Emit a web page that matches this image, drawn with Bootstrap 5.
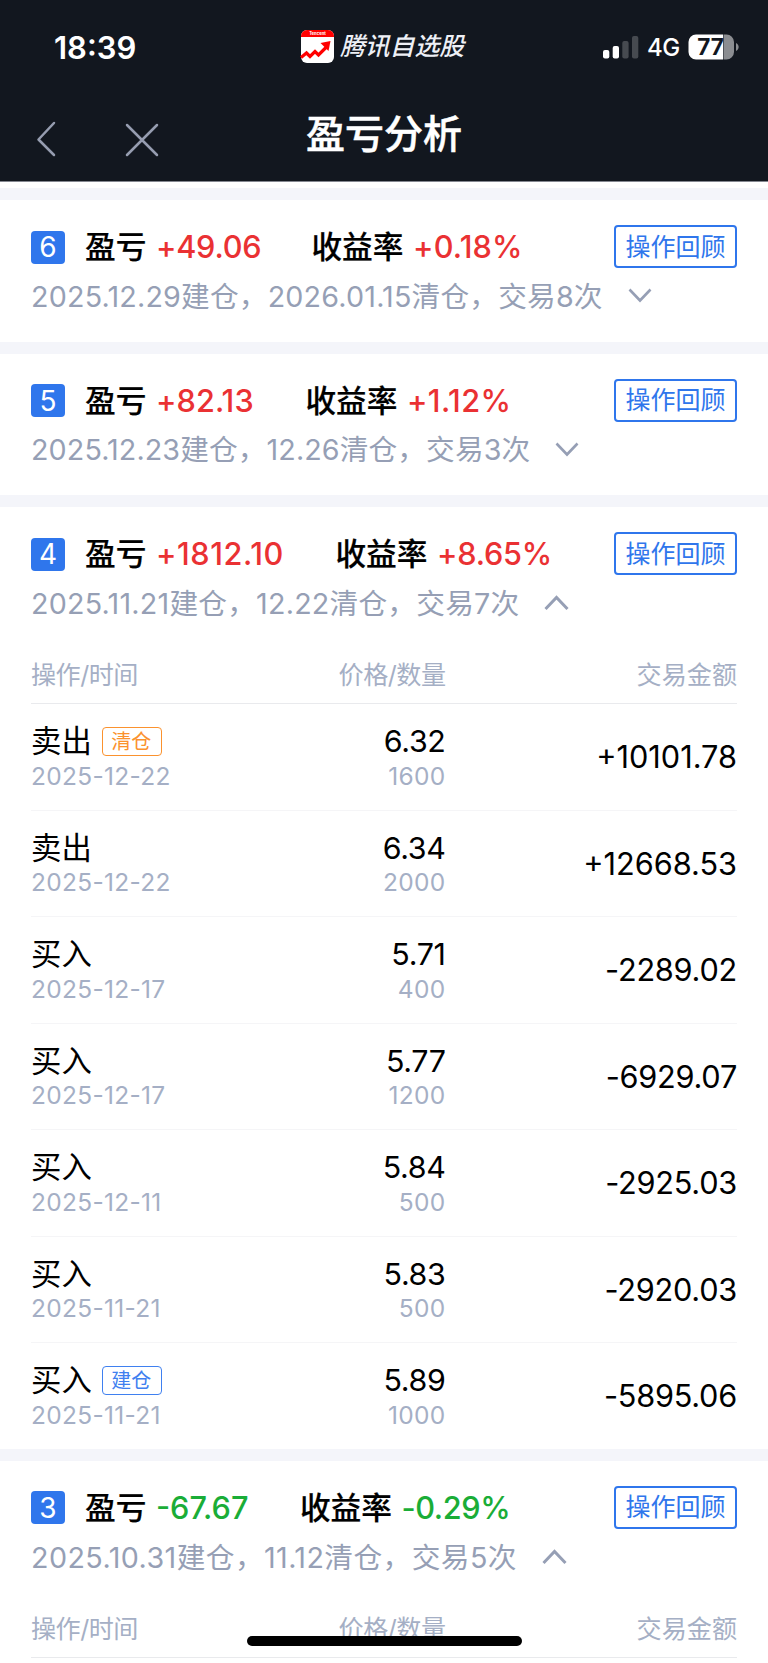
<!DOCTYPE html>
<html lang="zh-CN">
<head>
<meta charset="utf-8">
<meta name="viewport" content="width=device-width, initial-scale=1">
<title>盈亏分析</title>
<link rel="stylesheet" href="https://cdn.jsdelivr.net/npm/bootstrap@5.3.0/dist/css/bootstrap.min.css">
<style>
  body { font-family: Inter, "Noto Sans CJK SC", sans-serif; font-size: 30.7px; line-height: 1; color: #000; background: #fff; height: 1663px; overflow: hidden; position: relative; }
  .top-area { background: #12171f; height: 182px; border-bottom: 1px solid #848790; color: #fff; }
  .status-row { height: 94px; padding: 0 29px 0 54px; }
  .clock { font-size: 31px; font-weight: 600; width: 246px; padding-top: 1px; }
  .app-name { font-size: 24.8px; font-style: italic; font-weight: 500; margin-left: 6px; color: #eef0f6; padding-bottom: 2px; }
  .net { font-size: 24px; font-weight: 500; line-height: 1.4; padding: 1px 1px 0 0; letter-spacing: -.3px; margin-right: 7px; }
  .title-row { height: 87px; padding: 0 34px; }
  .page-title { font-size: 39px; font-weight: 500; -webkit-text-stroke: .5px #fff; padding-bottom: 6px; }
  .trade-card { border-top: 12px solid #f4f5fa; height: 153.6px; padding: 25px 31px 0 31px; }
  .trade-card.opened { height: auto; }
  .num-box { background: #2f76ec; color: #fff; width: 34px; height: 33px; border-radius: 4px; font-size: 28px; margin-top: 1px; }
  .head-row { height: 43px; font-weight: 500; }
  .label-text { padding-top: 2px; -webkit-text-stroke: .2px #000; }
  .value-text { padding-top: 2px; margin-left: 9.500px; letter-spacing: -.2px; }
  .rate-text { letter-spacing: .2px; }
  .gain { color: #ea3133; } .loss { color: #1aad37; }
  .review-btn { font-size: 25px; line-height: 1; color: #2f76ec; border: 2px solid #2f76ec; border-radius: 4px; width: 123px; height: 43px; padding: 1px 0 0; --bs-btn-hover-color: #2f76ec; }
  .date-row { height: 36px; margin-top: 11px; font-size: 28.7px; color: #969fb5; }
  .sp-a { letter-spacing: .18px; } .sp-b { letter-spacing: .1px; } .sp-c { letter-spacing: .21px; } .sp-d { letter-spacing: .42px; }
  .chev { margin-left: 25px; margin-top: -2px; }
  .grid-row { display: grid; grid-template-columns: 207px 207.500px 1fr; align-items: center; }
  .grid-head { height: 57px; margin-top: 25px; font-size: 25.100px; color: #a5afc5; border-bottom: 1px solid #e9eaed; padding-top: 1px; }
  .with-slash { letter-spacing: -.5px; }
  .op-row { height: 106.5px; border-bottom: 1px solid #f5f5f7; }
  .op-row:last-child { border-bottom: 0; height: 105.500px; }
  .sub-text { font-size: 24.5px; color: #a5afc5; letter-spacing: .3px; height: 29px; line-height: 29px; margin-top: -.5px; }
  .main-text { height: 41px; display: flex; align-items: center; font-size: 30.400px; margin-top: -2.200px; }
  .price-text { letter-spacing: -.35px; }
  .amount-text { padding-top: 1px; }
  .amount-out { letter-spacing: -.25px; }
  .tag-box { border: 1px solid; border-radius: 4px; font-size: 20px; width: 60px; height: 29px; margin-left: 10px; padding-right: 1px; display: flex; align-items: center; justify-content: center; letter-spacing: 0; }
  .tag-close { color: #fb922e; } .tag-open { color: #3f80f0; }
  .home-bar { position: absolute; left: 247px; top: 1636px; width: 275px; height: 10px; border-radius: 5px; background: #000; }
</style>
</head>
<body>
<header class="top-area">
  <div class="status-row d-flex align-items-center">
    <span class="clock">18:39</span>
    <svg width="34" height="34" viewBox="0 0 34 34">
      <rect x="1" y="0" width="33" height="33" rx="6" fill="#fff"/>
      <path d="M1 7V6a6 6 0 0 1 6-6h21a6 6 0 0 1 6 6v1z" fill="#f00"/>
      <text x="17.5" y="5" font-size="4.2" font-weight="700" fill="#fff" text-anchor="middle">Tencent</text>
      <path d="M1 27.5 6.5 23l3.5 3.5 5-5 3.5 3.5 8-8" fill="none" stroke="#f00" stroke-width="3.2"/>
      <path d="M20.500 13 30.500 11 28.500 21z" fill="#f00"/>
    </svg>
    <span class="app-name">腾讯自选股</span>
    <svg class="ms-auto" width="36" height="23" viewBox="0 0 36 23"><g fill="#fff"><rect x="0" y="14" width="6.300" height="8.500" rx="2"/><rect x="9.700" y="10" width="6.300" height="12.500" rx="2"/><g opacity=".22"><rect x="19.300" y="5" width="6.300" height="17.500" rx="2"/><rect x="29" y="0" width="6.300" height="22.500" rx="2"/></g></g></svg>
    <span class="net ms-2 flex-shrink-0 text-nowrap">4G</span>
    <svg width="51" height="26" viewBox="0 0 51 26">
      <path d="M8 .5h27v25H8a7.500 7.500 0 0 1-7.500-7.500V8A7.500 7.500 0 0 1 8 .5z" fill="#fff"/>
      <path d="M35.500 .5h3A7.500 7.500 0 0 1 46 8v10a7.500 7.500 0 0 1-7.500 7.500h-3z" fill="#8b8d91"/>
      <path d="M48 9c3.500 1.500 3.500 6.500 0 8z" fill="#8b8d91"/>
      <text x="22.500" y="21.300" font-size="22.500" font-weight="700" fill="#12171f" text-anchor="middle">77</text>
    </svg>
  </div>
  <div class="title-row position-relative d-flex align-items-center justify-content-center">
    <svg class="position-absolute" style="left:36px;top:27px" width="124" height="36" viewBox="0 0 124 36" fill="none" stroke="#969db0" stroke-width="2.500" stroke-linecap="round" stroke-linejoin="round"><path d="M18 2 2.500 18.500 18 34M91 4l30 30M121 4 91 34"/></svg>
    <h1 class="page-title mb-0">盈亏分析</h1>
  </div>
</header>
<main style="padding-top:6px">
  <section class="trade-card">
    <div class="head-row d-flex align-items-center">
      <span class="num-box d-flex align-items-center justify-content-center fw-normal">6</span>
      <span class="label-text" style="margin-left:20px">盈亏</span><span class="gain value-text" style="width:155.500px">+49.06</span>
      <span class="label-text">收益率</span><span class="gain value-text rate-text">+0.18%</span>
      <button class="btn review-btn ms-auto">操作回顾</button>
    </div>
    <div class="date-row d-flex align-items-center"><span class="sp-a">2025.12.29建仓，2026.01.15清仓，交易8次</span>
      <svg class="chev" width="24" height="16" fill="none" stroke="#969fb5" stroke-width="2.600"><path d="M1.500 1.500 12 12.500 22.500 1.500"/></svg></div>
  </section>
  <section class="trade-card">
    <div class="head-row d-flex align-items-center">
      <span class="num-box d-flex align-items-center justify-content-center fw-normal">5</span>
      <span class="label-text" style="margin-left:20px">盈亏</span><span class="gain value-text" style="width:149.500px;letter-spacing:.1px">+82.13</span>
      <span class="label-text">收益率</span><span class="gain value-text" style="letter-spacing:.4px">+1.12%</span>
      <button class="btn review-btn ms-auto">操作回顾</button>
    </div>
    <div class="date-row d-flex align-items-center"><span class="sp-b">2025.12.23建仓，12.26清仓，交易3次</span>
      <svg class="chev" width="24" height="16" fill="none" stroke="#969fb5" stroke-width="2.600"><path d="M1.500 1.500 12 12.500 22.500 1.500"/></svg></div>
  </section>
  <section class="trade-card opened">
    <div class="head-row d-flex align-items-center">
      <span class="num-box d-flex align-items-center justify-content-center fw-normal">4</span>
      <span class="label-text" style="margin-left:20px">盈亏</span><span class="gain value-text" style="width:179.500px;letter-spacing:.6px">+1812.10</span>
      <span class="label-text">收益率</span><span class="gain value-text">+8.65%</span>
      <button class="btn review-btn ms-auto">操作回顾</button>
    </div>
    <div class="date-row d-flex align-items-center"><span class="sp-c">2025.11.21建仓，12.22清仓，交易7次</span>
      <svg class="chev" width="25" height="16" fill="none" stroke="#969fb5" stroke-width="3"><path d="M1.500 14 12.500 2.500 23.500 14"/></svg></div>
    <div class="grid-row grid-head"><span class="with-slash">操作/时间</span><span class="text-end with-slash">价格/数量</span><span class="text-end">交易金额</span></div>
    <div>
      <div class="grid-row op-row"><div><div class="main-text">卖出<span class="tag-box tag-close">清仓</span></div><div class="sub-text">2025-12-22</div></div><div><div class="main-text price-text justify-content-end">6.32</div><div class="sub-text text-end">1600</div></div><div class="text-end amount-text">+10101.78</div></div>
      <div class="grid-row op-row"><div><div class="main-text">卖出</div><div class="sub-text">2025-12-22</div></div><div><div class="main-text price-text justify-content-end">6.34</div><div class="sub-text text-end">2000</div></div><div class="text-end amount-text">+12668.53</div></div>
      <div class="grid-row op-row"><div><div class="main-text">买入</div><div class="sub-text">2025-12-17</div></div><div><div class="main-text price-text justify-content-end">5.71</div><div class="sub-text text-end">400</div></div><div class="text-end amount-text amount-out">-2289.02</div></div>
      <div class="grid-row op-row"><div><div class="main-text">买入</div><div class="sub-text">2025-12-17</div></div><div><div class="main-text price-text justify-content-end">5.77</div><div class="sub-text text-end">1200</div></div><div class="text-end amount-text amount-out">-6929.07</div></div>
      <div class="grid-row op-row"><div><div class="main-text">买入</div><div class="sub-text">2025-12-11</div></div><div><div class="main-text price-text justify-content-end">5.84</div><div class="sub-text text-end">500</div></div><div class="text-end amount-text amount-out">-2925.03</div></div>
      <div class="grid-row op-row"><div><div class="main-text">买入</div><div class="sub-text">2025-11-21</div></div><div><div class="main-text price-text justify-content-end">5.83</div><div class="sub-text text-end">500</div></div><div class="text-end amount-text amount-out">-2920.03</div></div>
      <div class="grid-row op-row"><div><div class="main-text">买入<span class="tag-box tag-open">建仓</span></div><div class="sub-text">2025-11-21</div></div><div><div class="main-text price-text justify-content-end">5.89</div><div class="sub-text text-end">1000</div></div><div class="text-end amount-text amount-out">-5895.06</div></div>
    </div>
  </section>
  <section class="trade-card opened">
    <div class="head-row d-flex align-items-center">
      <span class="num-box d-flex align-items-center justify-content-center fw-normal">3</span>
      <span class="label-text" style="margin-left:20px">盈亏</span><span class="loss value-text" style="width:144px;letter-spacing:0">-67.67</span>
      <span class="label-text">收益率</span><span class="loss value-text" style="letter-spacing:-.4px">-0.29%</span>
      <button class="btn review-btn ms-auto">操作回顾</button>
    </div>
    <div class="date-row d-flex align-items-center" style="padding-top:1px"><span class="sp-d">2025.10.31建仓，11.12清仓，交易5次</span>
      <svg class="chev" width="25" height="16" fill="none" stroke="#969fb5" stroke-width="3"><path d="M1.500 14 12.500 2.500 23.500 14"/></svg></div>
    <div class="grid-row grid-head"><span class="with-slash">操作/时间</span><span class="text-end with-slash">价格/数量</span><span class="text-end">交易金额</span></div>
  </section>
</main>
<div class="home-bar"></div>
<script src="https://cdn.jsdelivr.net/npm/bootstrap@5.3.0/dist/js/bootstrap.bundle.min.js"></script>
</body>
</html>
